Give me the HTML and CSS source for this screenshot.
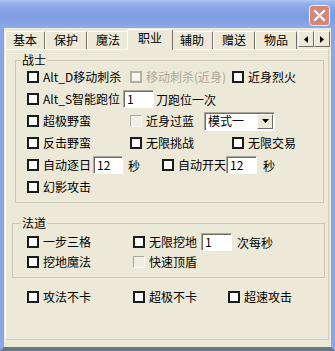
FILE: index.html
```html
<!DOCTYPE html>
<html lang="zh-CN">
<head>
  <meta charset="UTF-8" />
  <title>职业</title>
  <link rel="stylesheet" href="styles.css">
</head>
<body>
  <div class="window">
    <div class="titlebar">
      <svg class="close" width="21" height="21" viewBox="0 0 21 21">
        <rect x="0.5" y="0.5" width="20" height="20" rx="3" fill="#d3877a" stroke="#eef0fa"/>
        <path d="M6 6 L15 15 M15 6 L6 15" stroke="#fff" stroke-width="2.2" stroke-linecap="square"/>
      </svg>
    </div>

    <div class="client">
      <!-- tab strip -->
      <div class="tabs">
        <span class="tab w40">基本</span>
        <span class="tab">保护</span>
        <span class="tab">魔法</span>
        <span class="tab is-active">职业</span>
        <span class="tab">辅助</span>
        <span class="tab">赠送</span>
        <span class="tab">物品</span>
        <span class="tab-scroll">
          <span class="arrow"><svg width="4" height="7" viewBox="0 0 4 7"><path d="M4 0 L0 3.5 L4 7 Z" fill="#000"/></svg></span>
          <span class="arrow"><svg width="4" height="7" viewBox="0 0 4 7"><path d="M0 0 L4 3.5 L0 7 Z" fill="#000"/></svg></span>
        </span>
      </div>

      <div class="panel">
        <fieldset class="group">
          <legend>战士</legend>
          <div class="row">
            <label class="chk col-a"><i class="box"></i>Alt_D移动刺杀</label>
            <label class="chk col-b is-disabled"><i class="box"></i>移动刺杀(近身)</label>
            <label class="chk"><i class="box"></i>近身烈火</label>
          </div>
          <div class="row">
            <label class="chk w96"><i class="box"></i>Alt_S智能跑位</label>
            <span class="edit w31">1</span>
            <span class="after">刀跑位一次</span>
          </div>
          <div class="row">
            <label class="chk col-a"><i class="box"></i>超极野蛮</label>
            <label class="chk w74 is-flat"><i class="box"></i>近身过蓝</label>
            <span class="combo">
              <span class="combo__text">模式一</span>
              <span class="combo__btn"><svg width="7" height="4" viewBox="0 0 7 4"><path d="M0 0 H7 L3.5 4 Z" fill="#000"/></svg></span>
            </span>
          </div>
          <div class="row">
            <label class="chk col-a"><i class="box"></i>反击野蛮</label>
            <label class="chk col-b"><i class="box"></i>无限挑战</label>
            <label class="chk"><i class="box"></i>无限交易</label>
          </div>
          <div class="row">
            <label class="chk w66"><i class="box"></i>自动逐日</label>
            <span class="edit w30">12</span>
            <span class="unit">秒</span>
            <label class="chk w64"><i class="box"></i>自动开天</label>
            <span class="edit w31">12</span>
            <span class="unit unit--last">秒</span>
          </div>
          <div class="row">
            <label class="chk"><i class="box"></i>幻影攻击</label>
          </div>
        </fieldset>

        <fieldset class="group group--magic">
          <legend>法道</legend>
          <div class="row">
            <label class="chk w106"><i class="box"></i>一步三格</label>
            <label class="chk w68"><i class="box"></i>无限挖地</label>
            <span class="edit w31">1</span>
            <span class="unit">次每秒</span>
          </div>
          <div class="row">
            <label class="chk w106"><i class="box"></i>挖地魔法</label>
            <label class="chk is-flat"><i class="box"></i>快速顶盾</label>
          </div>
        </fieldset>

        <div class="row row--free">
          <label class="chk w106"><i class="box"></i>攻法不卡</label>
          <label class="chk w95"><i class="box"></i>超极不卡</label>
          <label class="chk"><i class="box"></i>超速攻击</label>
        </div>
      </div>
    </div>
  </div>
</body>
</html>
```

FILE: styles.css
```css
*{box-sizing:border-box;}
body{
  margin:0;background:#ece9d8;color:#000;
  font-family:"Noto Sans CJK SC","Noto Sans",sans-serif;font-size:12px;
}
.window{width:335px;height:351px;display:flex;flex-direction:column;background:#ece9d8;}

/* title bar (inactive xp look) */
.titlebar{
  height:28px;flex:none;display:flex;justify-content:flex-end;align-items:flex-start;
  padding:5px 5px 0 0;
  background:linear-gradient(180deg,#b0c5f2 0,#97b2ec 3px,#86a3e6 9px,#7f9de3 17px,#86a3e6 24px,#8fabe9 28px);
}
.close{display:block;}

.client{
  flex:1;display:flex;flex-direction:column;
  border-left:4px solid #8aa6e7;border-right:4px solid #8aa6e7;border-bottom:4px solid #6c7689;
  padding:1px 2px 7px 1px;
}

/* tabs */
.tabs{display:flex;align-items:flex-end;height:20px;flex:none;}
.tab{
  width:42px;height:18px;line-height:16px;text-align:center;flex:none;background:#ece9d8;
  border-top:1px solid #fff;border-left:1px solid #fff;border-right:1px solid #716f64;
  border-radius:2px 2px 0 0;
}
.tab.w40{width:40px;}
.tab.is-active{width:46px;height:21px;margin:0 -2px -1px;z-index:1;}
.tab-scroll{display:flex;align-self:flex-start;margin:2px -1px 0 1px;}
.arrow{
  width:16px;height:16px;display:flex;align-items:center;justify-content:center;
  background:#ece9d8;border:1px solid;border-color:#fff #716f64 #716f64 #fff;
}
.arrow svg{display:block;}

.panel{
  flex:1;display:flex;flex-direction:column;
  border:1px solid #fff;border-right-color:#d2cfbf;border-bottom-color:#d2cfbf;
}

/* group boxes */
.group{
  margin:4px 4px 0 9px;padding:0 0 4px 11px;min-width:0;
  border:1px solid #cbc8b8;
}
.group legend{padding:0 1px;margin-left:-6px;line-height:12px;}
.group--magic{margin:14px 3px 0 6px;padding:3px 0 5px 14px;}
.group--magic .row{height:20px;}

.row{display:flex;align-items:center;height:22px;white-space:nowrap;}
.row--free{margin:9px 0 0 21px;height:20px;}

.chk{display:flex;align-items:center;flex:none;line-height:14px;}
.box{
  width:12px;height:12px;flex:none;margin-right:4px;
  border:2px solid #1c1c1c;background:#fff;
}
.chk.is-disabled{color:#aca899;}
.chk.is-disabled .box{border-color:#b3b0a1;background:#f6f5f0;}
.chk.is-flat .box{border:1px solid;border-color:#aca899 #fff #fff #aca899;background:#f1efe4;}

.col-a{width:103px;}
.col-b{width:102px;}
.w64{width:64px;margin-left:11px;}
.w66{width:66px;}
.w68{width:68px;}
.w74{width:74px;}
.w95{width:95px;}
.w96{width:96px;}
.w106{width:106px;}

.edit{
  height:18px;line-height:16px;padding:0 3px;flex:none;background:#fff;
  border:1px solid;border-color:#aca899 #fff #fff #aca899;
  box-shadow:inset 1px 1px 0 #716f64;
}
.edit.w30{width:30px;}
.edit.w31{width:31px;}
.after{margin-left:2px;}
.unit{margin-left:5px;width:23px;}
.unit--last{margin-left:6px;}

.combo{
  width:71px;height:19px;display:flex;align-items:center;flex:none;
  padding:0 1px 0 3px;background:#fff;
  border:1px solid;border-color:#aca899 #fff #fff #aca899;
  box-shadow:inset 1px 1px 0 #716f64;
}
.combo__text{line-height:14px;}
.combo__btn{
  margin-left:auto;width:16px;height:15px;display:flex;align-items:center;justify-content:center;
  background:#ece9d8;border:1px solid;border-color:#fff #716f64 #716f64 #fff;
}
.combo__btn svg{display:block;}
```
